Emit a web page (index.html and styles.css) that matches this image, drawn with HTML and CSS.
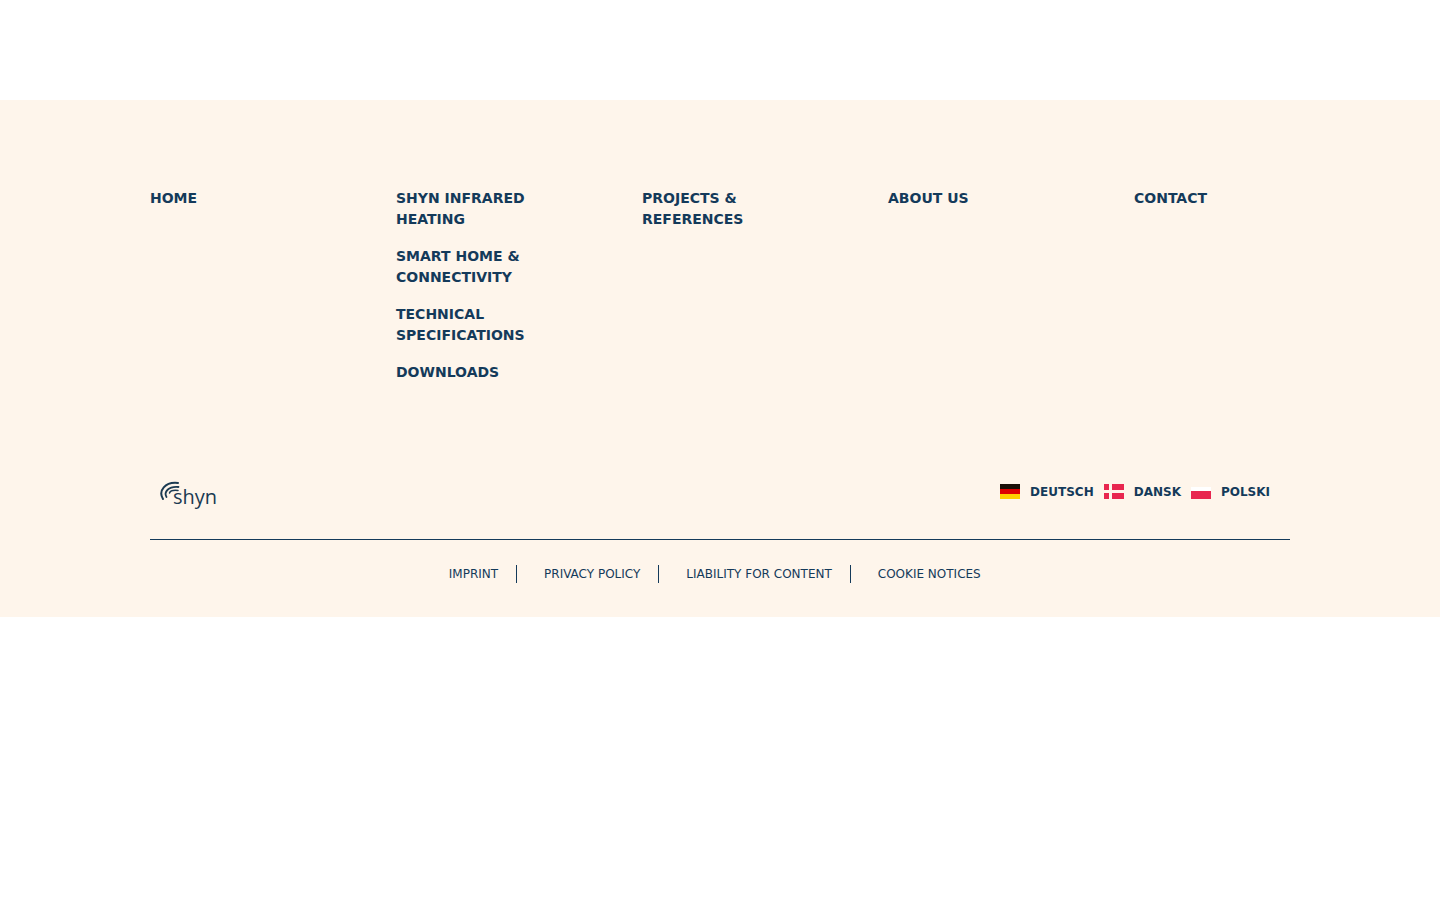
FILE: index.html
```html
<!DOCTYPE html>
<html lang="en">
<head>
    <meta charset="UTF-8">
    <meta name="viewport" content="width=device-width, initial-scale=1.0">
    <title>Shyn</title>
    <link rel="stylesheet" href="styles.css">
</head>
<body>
    <footer class="footer">
        <div class="footer-inner">
            <nav class="footer-nav">
                <ul class="nav-col">
                    <li><a href="#">Home</a></li>
                </ul>
                <ul class="nav-col">
                    <li><a href="#">Shyn Infrared Heating</a></li>
                    <li><a href="#">Smart Home &amp; Connectivity</a></li>
                    <li><a href="#">Technical Specifications</a></li>
                    <li><a href="#">Downloads</a></li>
                </ul>
                <ul class="nav-col">
                    <li><a href="#">Projects &amp; References</a></li>
                </ul>
                <ul class="nav-col">
                    <li><a href="#">About us</a></li>
                </ul>
                <ul class="nav-col">
                    <li><a href="#">Contact</a></li>
                </ul>
            </nav>

            <div class="footer-middle">
                <a href="#" class="logo">
                    <svg class="logo-waves" width="22" height="24" viewBox="0 0 22 24" fill="none" stroke="#1b3a52" stroke-linecap="round">
                        <path stroke-width="2" d="M4 19C-1 11 6 1.500 19 3"/>
                        <path stroke-width="1.800" d="M7.500 17C4.500 12 9.500 6 19.500 7"/>
                        <path stroke-width="1.500" d="M10.500 13C11 11.500 14 10 19 10.500"/>
                    </svg>
                    <span class="logo-text">shyn</span>
                </a>
                <div class="languages">
                    <a href="#" class="lang"><span class="flag flag-de"></span>Deutsch</a>
                    <a href="#" class="lang"><span class="flag flag-dk"></span>Dansk</a>
                    <a href="#" class="lang"><span class="flag flag-pl"></span>Polski</a>
                </div>
            </div>

            <div class="footer-legal">
                <a href="#">Imprint</a>
                <a href="#">Privacy Policy</a>
                <a href="#">Liability for content</a>
                <a href="#">Cookie notices</a>
            </div>
        </div>
    </footer>
</body>
</html>
```

FILE: styles.css
```css
body {
    font-family: 'DejaVu Sans', sans-serif;
    margin: 0;
    padding: 100px 0 0;
    background-color: white;
    color: #143a5a;
}
a {
    color: inherit;
    text-decoration: none;
}
.footer {
    background-color: #fef5eb;
    height: 517px;
}
.footer-inner {
    width: 1140px;
    margin: 0 auto;
    padding-top: 88px;
}
.footer-nav {
    display: grid;
    grid-template-columns: repeat(5, 1fr);
    gap: 90px;
    height: 282px;
}
.nav-col {
    list-style: none;
    margin: 0;
    padding: 0;
    display: flex;
    flex-direction: column;
    gap: 16px;
}
.nav-col a {
    display: block;
    font-size: 14px;
    font-weight: bold;
    line-height: 21px;
    text-transform: uppercase;
}
.footer-middle {
    display: flex;
    justify-content: space-between;
    align-items: flex-start;
    height: 69px;
    border-bottom: 1px solid #143a5a;
    padding: 0 20px 0 9px;
}
.logo {
    display: flex;
    align-items: flex-start;
    padding-top: 10px;
}
.logo-waves {
    display: block;
}
.logo-text {
    font-family: 'Open Sans', sans-serif;
    font-size: 20px;
    line-height: 22px;
    margin: 6px 0 0 -8px;
    color: #1b3a52;
}
.languages {
    display: flex;
    gap: 10px;
    padding-top: 12px;
}
.lang {
    display: flex;
    align-items: flex-start;
    gap: 10px;
    font-size: 12px;
    font-weight: bold;
    line-height: 20px;
    text-transform: uppercase;
}
.flag {
    display: block;
    width: 20px;
    height: 15px;
    margin-top: 2px;
}
.flag-de {
    background: linear-gradient(#1a1008 0 5px, #dd0000 5px 10px, #ffce00 10px);
}
.flag-dk {
    background:
        linear-gradient(#fef5eb, #fef5eb) 5px 0 / 3px 100% no-repeat,
        linear-gradient(#fef5eb, #fef5eb) 0 6px / 100% 3px no-repeat,
        #e8264f;
}
.flag-pl {
    background: linear-gradient(transparent 3px, #fff 3px 7px, #e8264f 7px);
}
.footer-legal {
    display: flex;
    justify-content: center;
    padding-top: 25px;
    padding-right: 10.5px;
}
.footer-legal a {
    font-size: 12px;
    line-height: 18px;
    padding-right: 18px;
    margin-right: 27px;
    border-right: 1px solid #143a5a;
    text-transform: uppercase;
}
.footer-legal a:last-child {
    border-right: none;
    margin-right: 0;
    padding-right: 0;
}
```
